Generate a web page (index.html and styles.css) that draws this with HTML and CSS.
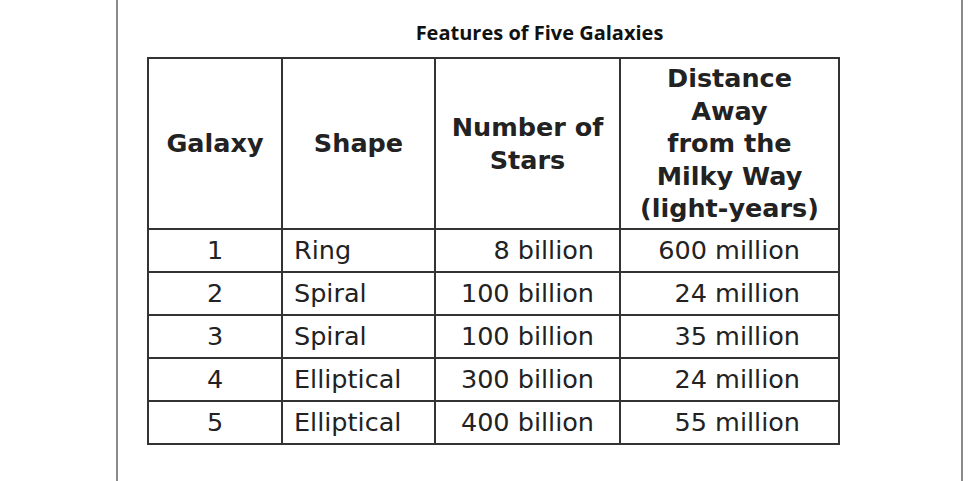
FILE: index.html
```html
<!DOCTYPE html>
<html>
<head>
<meta charset="utf-8">
<link rel="stylesheet" href="styles.css">
</head>
<body>
<div class="page">
  <h1 class="title">Features of Five Galaxies</h1>
  <table class="galaxies">
    <colgroup>
      <col class="c1"><col class="c2"><col class="c3"><col class="c4">
    </colgroup>
    <thead>
      <tr>
        <th>Galaxy</th>
        <th>Shape</th>
        <th>Number of<br>Stars</th>
        <th>Distance<br>Away<br>from the<br>Milky Way<br>(light-years)</th>
      </tr>
    </thead>
    <tbody>
      <tr><td class="num">1</td><td class="shape">Ring</td><td class="stars">8 billion</td><td class="dist">600 million</td></tr>
      <tr><td class="num">2</td><td class="shape">Spiral</td><td class="stars">100 billion</td><td class="dist">24 million</td></tr>
      <tr><td class="num">3</td><td class="shape">Spiral</td><td class="stars">100 billion</td><td class="dist">35 million</td></tr>
      <tr><td class="num">4</td><td class="shape">Elliptical</td><td class="stars">300 billion</td><td class="dist">24 million</td></tr>
      <tr><td class="num">5</td><td class="shape">Elliptical</td><td class="stars">400 billion</td><td class="dist">55 million</td></tr>
    </tbody>
  </table>
</div>
</body>
</html>
```

FILE: styles.css
```css
html, body {
  margin: 0;
  padding: 0;
  background: #ffffff;
}

.page {
  box-sizing: border-box;
  margin-left: 116px;
  width: 847px;
  height: 481px;
  border-left: 2px solid #8a8a8a;
  border-right: 2px solid #8a8a8a;
  padding-top: 21px;
  padding-left: 29px;
}

.title {
  margin: 0 0 0 -29px;
  width: 843px;
  text-align: center;
  font-family: "Open Sans", "Liberation Sans", sans-serif;
  font-weight: 700;
  font-size: 20px;
  line-height: 24px;
  color: #111;
}

.galaxies {
  margin-top: 12px;
  border-collapse: collapse;
  table-layout: fixed;
  width: 691px;
  font-family: "DejaVu Sans", Verdana, sans-serif;
  font-size: 25.5px;
  color: #222;
}

.c1 { width: 134px; }
.c2 { width: 153px; }
.c3 { width: 185px; }
.c4 { width: 219px; }

.galaxies th,
.galaxies td {
  border: 2px solid #333;
  padding: 0;
}

.galaxies th {
  height: 169px;
  font-weight: 700;
  line-height: 32.5px;
  text-align: center;
  vertical-align: middle;
  color: #222;
}

.galaxies td {
  height: 41px;
  line-height: 41px;
  vertical-align: middle;
}

.num { text-align: center; }
.shape { text-align: left; padding-left: 11px !important; }
.stars { text-align: right; padding-right: 25px !important; }
.dist { text-align: right; padding-right: 38px !important; }
```
